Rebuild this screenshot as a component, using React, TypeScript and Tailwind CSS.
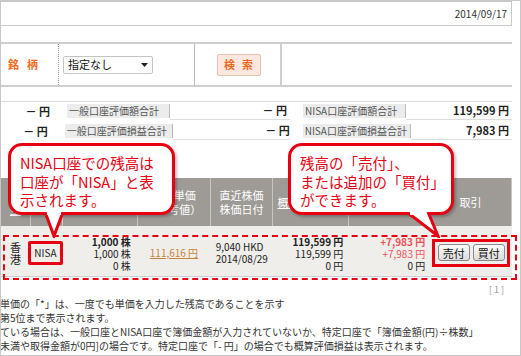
import type { ReactNode } from "react";

const font = { fontFamily: '"MS UI Gothic", "Noto Sans CJK JP", sans-serif' };

function Callout({ lines, className, tail }: { lines: string[]; className: string; tail: ReactNode }) {
  return (
    <div className={`absolute ${className}`}>
      <div className="relative h-[72px] rounded-[14px] border-[3px] border-[#e60012] bg-white pl-[9px] pt-[8px] text-[14.5px] leading-[18.5px] text-[#e60012] whitespace-nowrap shadow-[2px_2px_3px_rgba(0,0,0,0.25)]">
        {lines.map((l) => (
          <div key={l}>{l}</div>
        ))}
      </div>
      {tail}
    </div>
  );
}

const cols = ["w-[30px]", "w-[32px]", "w-[75px]", "w-[73px]", "w-[63px]", "w-[76px]", "w-[81px]", "w-[82px]"];

export default function App() {
  return (
    <div className="relative w-[521px] h-[356px] overflow-hidden bg-white text-[10px] text-[#222]" style={font}>
      <div className="absolute inset-0 border border-[#c8c8c8] pointer-events-none" />
      <div className="w-[512px]">
        {/* date bar */}
        <div className="mt-[1px] h-[25px] border border-[#c9c9c9] flex items-center justify-end pr-[4px] text-[10px] text-[#333]">
          2014/09/17
        </div>
        <div className="h-[18px] border-b-2 border-[#cfcfcf]" />

        {/* search row */}
        <div className="flex h-[43px] border-b-2 border-[#cfcfcf]">
          <div className="w-[59px] flex items-center pl-[8px] text-[11px] font-bold text-[#f06a1e] tracking-[8px] border-r border-dotted border-[#999]">
            銘柄
          </div>
          <div className="w-[136px] flex items-center pl-[4px] border-r border-[#bbb]">
            <div className="w-[90px] h-[18px] rounded-[2px] border border-[#c4c4c4] bg-white flex items-center justify-between px-[4px] text-[11px] text-[#111]">
              指定なし
              <svg width="7" height="4" viewBox="0 0 7 4"><path d="M0 0h7L3.5 4z" fill="#222" /></svg>
            </div>
          </div>
          <div className="w-[87px] flex items-center pl-[22px] border-r-2 border-[#cfcfcf]">
            <div className="w-[44px] h-[22px] rounded-[2px] border border-[#e7c2b4] bg-[#fde8e0] flex items-center justify-center text-[11px] font-bold text-[#f06a1e] tracking-[7px] pl-[6px]">
              検索
            </div>
          </div>
        </div>

        {/* summary */}
        <div className="mt-[14px] flex flex-col gap-[6px] pt-[2px] border-t border-[#ddd]">
          {[
            ["一般口座評価額合計", "NISA口座評価額合計", "119,599 円", "w-[103px]"],
            ["一般口座評価損益合計", "NISA口座評価損益合計", "7,983 円", "w-[113px]"],
          ].map(([a, b, v, w]) => (
            <div key={a} className="flex items-center h-[14px]">
              <div className="w-[50px] text-right font-bold text-[11px]">－ 円</div>
              <div className={`ml-[17px] ${w} h-[14px] bg-[#ececec] border-r border-[#bbb] pl-[2px] text-[#555] leading-[14px]`}>{a}</div>
              <div className="flex-1 flex items-center border-b border-[#ddd]">
                <div className="w-[117px] text-right font-bold text-[11px]">－ 円</div>
              </div>
              <div className={`${w} h-[14px] ml-[13px] bg-[#ececec] border-r border-[#bbb] pl-[2px] text-[#555] leading-[14px]`}>{b}</div>
              <div className="w-[106px] text-right font-bold text-[11px] pr-[3px] border-b border-[#ddd]">{v}</div>
            </div>
          ))}
        </div>

        {/* table */}
        <div className="mt-[40px] border-l border-[#888]">
          <div className="flex h-[48px] bg-[#9e9a96] text-white text-[11px] leading-[14px]">
            {[
              ["型"],
              [""],
              ["残高数量", "注文中株数"],
              ["取得単価", "（参考値）"],
              ["直近株価", "株価日付"],
              ["概算評価額"],
              ["概算評価損益"],
              ["取引"],
            ].map((c, i) => (
              <div key={i} className={`${cols[i]} border-r border-[#c9c5c1] flex flex-col items-center justify-center ${i === 0 ? "justify-end pb-[10px] underline" : ""} ${i === 5 ? "items-start pl-[4px] underline" : ""}`}>
                {c.map((t) => (
                  <div key={t}>{t}</div>
                ))}
              </div>
            ))}
          </div>
          <div className="flex h-[51px] bg-[#efeeea] border-b border-[#ccc] leading-[12px]">
            <div className={`${cols[0]} flex flex-col justify-center pt-[4px] pl-[9px] text-[11px] leading-[12px]`}>
              <div>香</div>
              <div>港</div>
            </div>
            <div className={`${cols[1]} flex items-center pt-[4px]`}>
              <div className="-ml-[3px] w-[35px] h-[24px] border-[3px] border-[#e60012] rounded-[2px] flex items-center justify-center text-[10px]">NISA</div>
            </div>
            <div className={`${cols[2]} flex flex-col justify-center items-end pt-[6px] pr-[7px]`}>
              <div className="font-bold">1,000 株</div>
              <div>1,000 株</div>
              <div>0 株</div>
            </div>
            <div className={`${cols[3]} flex items-center pt-[4px] pl-[12px] text-[#c8823c] underline`}>111,616 円</div>
            <div className={`${cols[4]} flex flex-col justify-center pt-[4px] pl-[5px]`}>
              <div>9,040 HKD</div>
              <div>2014/08/29</div>
            </div>
            <div className={`${cols[5]} flex flex-col justify-center items-end pt-[6px] pr-[6px]`}>
              <div className="font-bold">119,599 円</div>
              <div>119,599 円</div>
              <div>0 円</div>
            </div>
            <div className={`${cols[6]} flex flex-col justify-center items-end pt-[6px] pr-[5px] text-[#f0505a]`}>
              <div className="font-bold">+7,983 円</div>
              <div>+7,983 円</div>
              <div className="text-[#222]">0 円</div>
            </div>
            <div className={`${cols[7]} flex items-center pt-[3px] pl-[2px]`}>
              <div className="w-[78px] h-[28px] border-[3px] border-[#e60012] flex items-center justify-center gap-[3px] bg-[#efeeea]">
                {["売付", "買付"].map((b) => (
                  <div key={b} className="w-[32px] h-[17px] rounded-[3px] border border-[#888] bg-gradient-to-b from-[#fbfbfb] to-[#dcdcdc] flex items-center justify-center text-[11px] text-[#111]">
                    {b}
                  </div>
                ))}
              </div>
            </div>
          </div>
        </div>

        <div className="mt-[6px] text-right pr-[8px] text-[9px] text-[#999]">[ 1 ]</div>
        <div className="text-[10px] leading-[14px] text-[#333] whitespace-nowrap">
          <div>単価の「*」は、一度でも単価を入力した残高であることを示す</div>
          <div>第5位まで表示されます。</div>
          <div>ている場合は、一般口座とNISA口座で簿価金額が入力されていないか、特定口座で「簿価金額(円)÷株数」</div>
          <div>未満や取得金額が0円]の場合です。特定口座で「- 円」の場合でも概算評価損益は表示されます。</div>
        </div>
      </div>

      {/* red dashed highlight */}
      <div className="absolute left-[3px] top-[235px] w-[514px] h-[45px] border-2 border-dashed border-[#e60012] pointer-events-none" />

      <Callout
        className="left-[8px] top-[143px] w-[167px]"
        lines={["NISA口座での残高は", "口座が「NISA」と表", "示されます。"]}
        tail={
          <svg className="absolute left-[36px] top-[69px]" width="22" height="26" viewBox="0 0 22 26">
            <path d="M1 0 L10 24 L19 0" fill="white" stroke="#e60012" strokeWidth="3" />
            <rect x="3" y="0" width="14" height="3" fill="white" />
          </svg>
        }
      />
      <Callout
        className="left-[288px] top-[143px] w-[166px]"
        lines={["残高の「売付」、", "または追加の「買付」", "ができます。"]}
        tail={
          <svg className="absolute left-[118px] top-[69px]" width="34" height="26" viewBox="0 0 34 26">
            <path d="M1 0 L32 24 L22 0" fill="white" stroke="#e60012" strokeWidth="3" />
            <rect x="4" y="0" width="16" height="3" fill="white" />
          </svg>
        }
      />
    </div>
  );
}
